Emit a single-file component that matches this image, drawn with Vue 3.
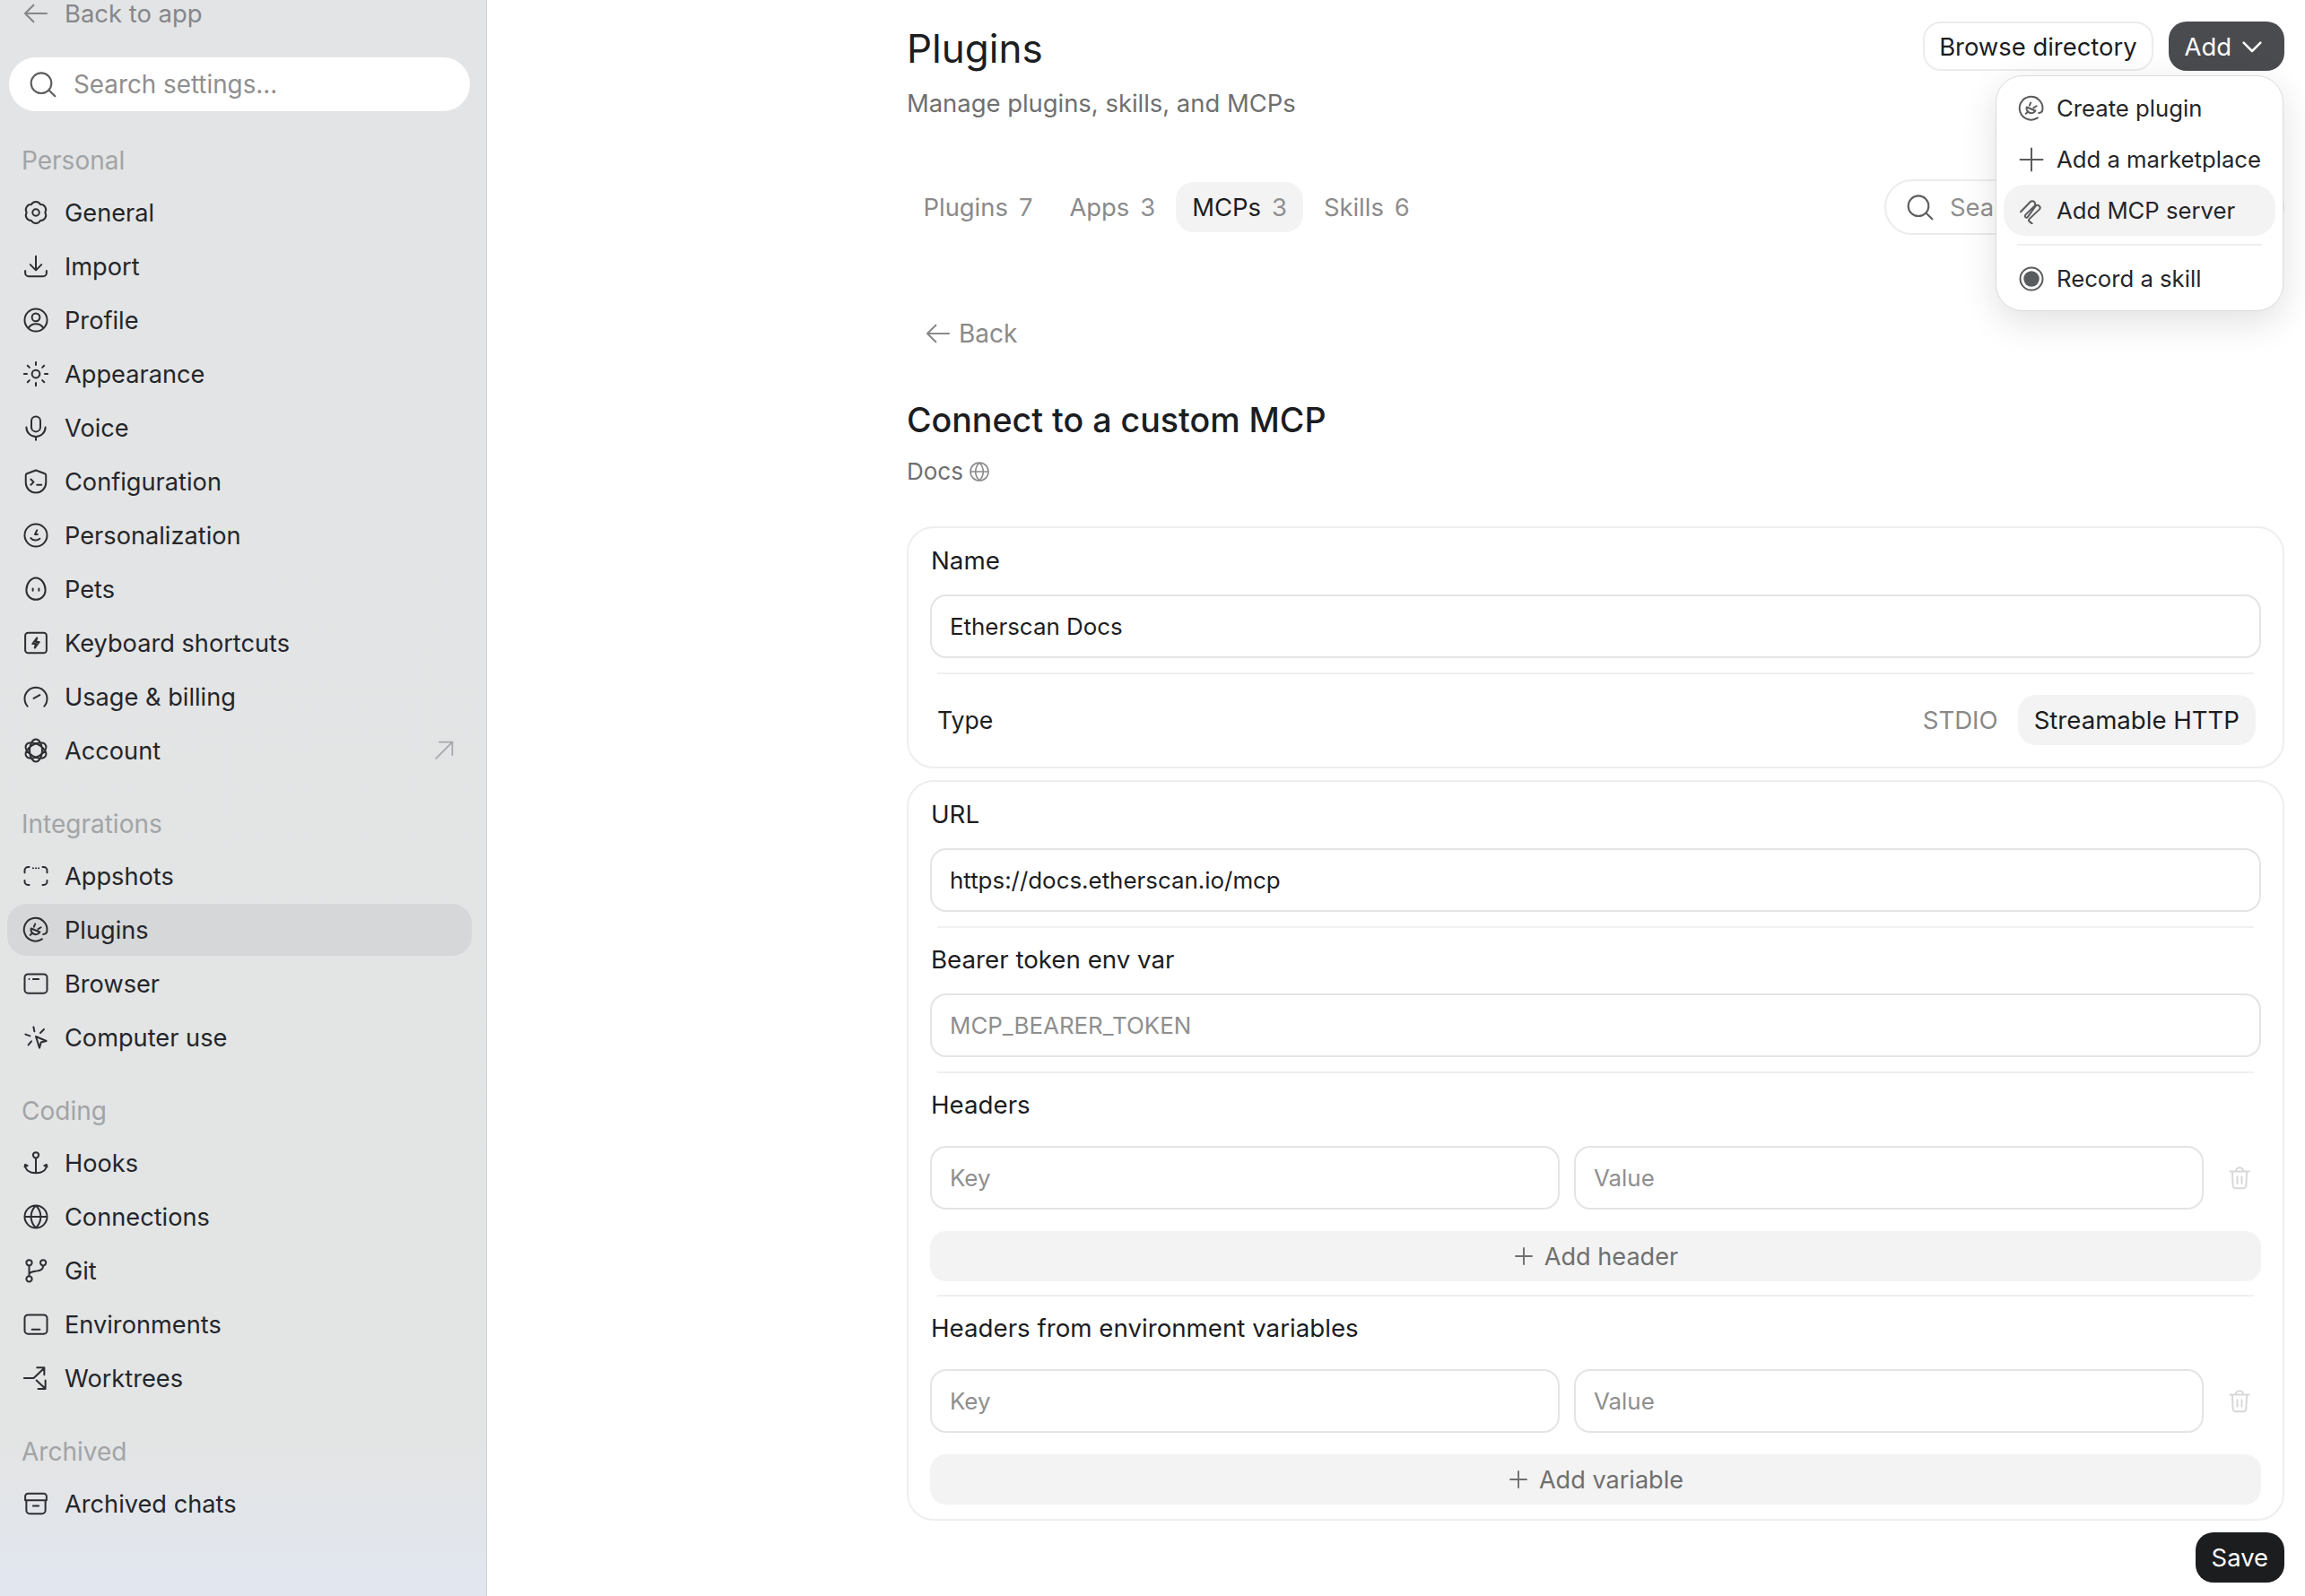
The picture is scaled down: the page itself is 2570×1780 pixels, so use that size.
<template>
  <div class="app">
    <aside class="sidebar">
      <div class="back-app">
        <svg class="ico" viewBox="0 0 24 24"><path d="M21 12H3M10 5l-7 7 7 7" /></svg>
        <span>Back to app</span>
      </div>
      <label class="side-search">
        <svg class="ico" viewBox="0 0 24 24"><path :d="icons.search" /></svg>
        <input placeholder="Search settings..." />
      </label>

      <section v-for="group in nav" :key="group.title" class="group">
        <h4>{{ group.title }}</h4>
        <a v-for="item in group.items" :key="item.label" class="nav-row" :class="{ active: item.label === 'Plugins' }">
          <svg class="ico" viewBox="0 0 24 24"><path :d="icons[item.icon]" /></svg>
          <span>{{ item.label }}</span>
          <svg v-if="item.external" class="ext" viewBox="0 0 24 24"><path d="M4 20 20 4M7 4h13v13" /></svg>
        </a>
      </section>
    </aside>

    <main class="main">
      <header class="head">
        <div>
          <h1>Plugins</h1>
          <p class="sub">Manage plugins, skills, and MCPs</p>
        </div>
        <div class="actions">
          <button class="btn-outline">Browse directory</button>
          <button class="btn-add">
            Add
            <svg viewBox="0 0 24 24"><path d="M4.500 8.500 12 16l7.500-7.500" /></svg>
          </button>
        </div>
      </header>

      <!-- dropdown from the Add button -->
      <div class="menu">
        <div class="menu-row">
          <svg class="ico" viewBox="0 0 24 24"><path :d="icons.plugin" /></svg>
          Create plugin
        </div>
        <div class="menu-row">
          <svg class="ico" viewBox="0 0 24 24"><path d="M12 2v20M2 12h20" /></svg>
          Add a marketplace
        </div>
        <div class="menu-row hover">
          <svg class="ico" viewBox="0 0 24 24"><path :d="icons.mcp" /></svg>
          Add MCP server
        </div>
        <hr />
        <div class="menu-row">
          <svg class="ico" viewBox="0 0 24 24">
            <path d="M22 12a10 10 0 1 1-20 0 10 10 0 0 1 20 0Z" />
            <circle class="dot" cx="12" cy="12" r="7" />
          </svg>
          Record a skill
        </div>
      </div>

      <div class="tabs-row">
        <nav class="tabs">
          <a v-for="t in tabs" :key="t.label" class="tab" :class="{ on: t.label === 'MCPs' }">
            <span>{{ t.label }}</span><small>{{ t.count }}</small>
          </a>
        </nav>
        <label class="tab-search">
          <svg class="ico" viewBox="0 0 24 24"><path :d="icons.search" /></svg>
          <input placeholder="Search..." />
        </label>
      </div>

      <div class="back">
        <svg class="ico" viewBox="0 0 24 24"><path d="M21 12H3M10 5l-7 7 7 7" /></svg>
        Back
      </div>

      <h2>Connect to a custom MCP</h2>
      <div class="docs">
        Docs
        <svg class="ico" viewBox="0 0 24 24"><path :d="icons.globe" /></svg>
      </div>

      <form class="card" @submit.prevent>
        <label class="field-label">Name</label>
        <input class="field" value="Etherscan Docs" />
        <div class="rule"></div>
        <div class="type-row">
          <span>Type</span>
          <div class="seg">
            <a>STDIO</a>
            <a class="on">Streamable HTTP</a>
          </div>
        </div>
      </form>

      <form class="card second" @submit.prevent>
        <label class="field-label">URL</label>
        <input class="field" value="https://docs.etherscan.io/mcp" />
        <div class="rule"></div>

        <label class="field-label">Bearer token env var</label>
        <input class="field" placeholder="MCP_BEARER_TOKEN" />
        <div class="rule"></div>

        <label class="field-label">Headers</label>
        <div class="kv">
          <input class="field" placeholder="Key" />
          <input class="field" placeholder="Value" />
          <svg class="trash" viewBox="0 0 24 24"><path :d="icons.trash" /></svg>
        </div>
        <button class="add-row"><svg viewBox="0 0 24 24"><path d="M12 3v18M3 12h18" /></svg>Add header</button>
        <div class="rule"></div>

        <label class="field-label">Headers from environment variables</label>
        <div class="kv">
          <input class="field" placeholder="Key" />
          <input class="field" placeholder="Value" />
          <svg class="trash" viewBox="0 0 24 24"><path :d="icons.trash" /></svg>
        </div>
        <button class="add-row"><svg viewBox="0 0 24 24"><path d="M12 3v18M3 12h18" /></svg>Add variable</button>
      </form>

      <div class="foot">
        <button class="btn-save">Save</button>
      </div>
    </main>
  </div>
</template>

<script setup>
const nav = [
  {
    title: 'Personal',
    items: [
      { label: 'General', icon: 'gear' },
      { label: 'Import', icon: 'import' },
      { label: 'Profile', icon: 'profile' },
      { label: 'Appearance', icon: 'sun' },
      { label: 'Voice', icon: 'mic' },
      { label: 'Configuration', icon: 'shield' },
      { label: 'Personalization', icon: 'smile' },
      { label: 'Pets', icon: 'egg' },
      { label: 'Keyboard shortcuts', icon: 'bolt' },
      { label: 'Usage & billing', icon: 'gauge' },
      { label: 'Account', icon: 'knot', external: true },
    ],
  },
  {
    title: 'Integrations',
    items: [
      { label: 'Appshots', icon: 'shots' },
      { label: 'Plugins', icon: 'plugin' },
      { label: 'Browser', icon: 'browser' },
      { label: 'Computer use', icon: 'cursor' },
    ],
  },
  {
    title: 'Coding',
    items: [
      { label: 'Hooks', icon: 'anchor' },
      { label: 'Connections', icon: 'globe' },
      { label: 'Git', icon: 'git' },
      { label: 'Environments', icon: 'env' },
      { label: 'Worktrees', icon: 'tree' },
    ],
  },
  {
    title: 'Archived',
    items: [{ label: 'Archived chats', icon: 'archive' }],
  },
]

const tabs = [
  { label: 'Plugins', count: 7 },
  { label: 'Apps', count: 3 },
  { label: 'MCPs', count: 3 },
  { label: 'Skills', count: 6 },
]

// all icons are drawn on a 24 grid, stroke only
const icons = {
  search: 'M19 11a8.500 8.500 0 1 1-17 0 8.500 8.500 0 0 1 17 0ZM17 17l5 5',
  gear: 'M7.900 4.900A4.600 4.600 0 0 1 16.100 4.900 4.600 4.600 0 0 1 20.200 12 4.600 4.600 0 0 1 16.100 19.100 4.600 4.600 0 0 1 7.900 19.100 4.600 4.600 0 0 1 3.800 12 4.600 4.600 0 0 1 7.900 4.900ZM15 12a3 3 0 1 1-6 0 3 3 0 0 1 6 0Z',
  import: 'M12 3v12M7 10.500l5 5 5-5M2.500 16v2a3 3 0 0 0 3 3h13a3 3 0 0 0 3-3v-2',
  profile: 'M22 12a10 10 0 1 1-20 0 10 10 0 0 1 20 0ZM15.500 9.500a3.500 3.500 0 1 1-7 0 3.500 3.500 0 0 1 7 0ZM5.500 19c1.500-2.700 3.800-3.600 6.500-3.600s5 .9 6.500 3.600',
  sun: 'M15.500 12a3.500 3.500 0 1 1-7 0 3.500 3.500 0 0 1 7 0ZM12 1.500v2.500M12 20v2.500M1.500 12H4M20 12h2.500M4.600 4.600l1.700 1.700M17.700 17.700l1.700 1.700M4.600 19.400l1.700-1.700M17.700 6.300l1.700-1.700',
  mic: 'M8 6a4 4 0 0 1 8 0v5.500a4 4 0 0 1-8 0ZM3.500 11.500a8.500 8.500 0 0 0 17 0M12 20v3',
  shield: 'M12 2 20 5a1.500 1.500 0 0 1 1 1.400V13a9 9 0 0 1-18 0V6.400A1.500 1.500 0 0 1 4 5ZM7.500 10l2.500 2.500L7.500 15M13 15h4',
  smile: 'M22 12a10 10 0 1 1-20 0 10 10 0 0 1 20 0ZM7.500 14.500c1.800 2.300 5.500 2.700 8 .5M13 7.500l-1.800 3.700h2.300',
  egg: 'M12 2c4.700 0 8.500 5.300 8.500 11a8.500 8.500 0 0 1-17 0C3.500 7.300 7.300 2 12 2ZM9.300 11.500v1.800M14.700 11.500v1.800',
  bolt: 'M5 3h14a2.500 2.500 0 0 1 2.500 2.500v13A2.500 2.500 0 0 1 19 21H5a2.500 2.500 0 0 1-2.500-2.500v-13A2.500 2.500 0 0 1 5 3ZM13 7.500 9 12.800h3l-1 3.700 4-5.300h-3Z',
  gauge: 'M4.500 20.500a10 10 0 1 1 15 0M10 13.500l5.500-3',
  knot: 'M20.660 17A10 5.600 30 1 1 3.340 7 10 5.600 30 1 1 20.660 17ZM12 22A10 5.600 90 1 1 12 2 10 5.600 90 1 1 12 22ZM3.340 17A10 5.600 150 1 1 20.660 7 10 5.600 150 1 1 3.340 17Z',
  shots: 'M2 9V7a3 3 0 0 1 3-3h1M18 4h1a3 3 0 0 1 3 3v2M22 16v1a3 3 0 0 1-3 3h-1M6 20H5a3 3 0 0 1-3-3v-1M9.500 5h.01M12 5h.01M14.500 5h.01',
  plugin: 'M17.500 20.300A10.300 10.300 0 1 1 22 12c0 2.500-1.500 4-3.500 4M7.800 10.800 15.500 14a4.200 4.200 0 0 1-7.700-3.200ZM10.300 9.300l1-2.500M14 11.300l2.500-1.500M8.500 15.200l-1.500 1.500',
  browser: 'M5 3.500h14a3 3 0 0 1 3 3v11a3 3 0 0 1-3 3H5a3 3 0 0 1-3-3v-11a3 3 0 0 1 3-3ZM6 8h.01M9.500 8h5',
  cursor: 'M12 11.200 21.300 15.200 16.600 16.400 15.200 21.300ZM9.900 2.700l.8 4M2.700 9.300l4 1.400M19.200 4.800 16 8M8 15.500l-2.700 3.200',
  anchor: 'M14.500 5a2.500 2.500 0 1 1-5 0 2.500 2.500 0 0 1 5 0ZM12 7.500V21M2.500 13.500C2.500 18.500 6.500 21 12 21s9.500-2.500 9.500-7.500M2 15.500l.5-2 2 1M22 15.500l-.5-2-2 1',
  globe: 'M22 12a10 10 0 1 1-20 0 10 10 0 0 1 20 0ZM2 12h20M12 2c3 3 4.300 6.500 4.300 10s-1.300 7-4.300 10c-3-3-4.300-6.500-4.300-10S9 5 12 2Z',
  git: 'M8.500 5a2.500 2.500 0 1 1-5 0 2.500 2.500 0 0 1 5 0ZM8.500 19.500a2.500 2.500 0 1 1-5 0 2.500 2.500 0 0 1 5 0ZM21 5a2.500 2.500 0 1 1-5 0 2.500 2.500 0 0 1 5 0ZM6 7.500V17M18.500 7.500c0 4-3 4.500-6 5-2.700.4-5.500.6-6.500 2.500',
  env: 'M5 3.500h14a3 3 0 0 1 3 3v11a3 3 0 0 1-3 3H5a3 3 0 0 1-3-3v-11a3 3 0 0 1 3-3ZM8.500 16.500h7',
  tree: 'M1.500 12H10l9.500-9M13 2.500h6.500V9M12.500 14l7.500 7M20.500 14v7.500H14',
  archive: 'M5 3h14a2.500 2.500 0 0 1 2.500 2.500V9h-19V5.500A2.500 2.500 0 0 1 5 3ZM3.500 9v9A3 3 0 0 0 6.500 21h11a3 3 0 0 0 3-3V9M9.500 14h5',
  mcp: 'M2.400 13 10.900 4.200a2.600 2.600 0 0 1 3.700 3.700L6.600 15.700a1.400 1.400 0 0 0 2 2L15.800 7.800a2.200 2.200 0 0 1 3.200 3.100L10 19.500a1.400 1.400 0 0 0 0 2l2.500 2',
  trash: 'M3.500 6h17M8.500 6a3.500 3.500 0 0 1 7 0M5.500 6l.6 12.500A2.500 2.500 0 0 0 8.600 21h6.800a2.500 2.500 0 0 0 2.500-2.500L18.500 6M10 10.500v6M14 10.500v6',
}
</script>

<style>
html, body { margin: 0; background: #fff; }
</style>

<style scoped>
.app { display: flex; height: 1780px; overflow: hidden; background: #fff; color: #1c1d1f; font-family: Inter, "Liberation Sans", sans-serif; font-size: 27.400px; }
.ico { width: 30px; height: 30px; flex: none; fill: none; stroke: currentColor; stroke-width: 1.600; stroke-linecap: round; stroke-linejoin: round; }
input { font: inherit; color: inherit; border: 0; outline: 0; background: none; padding: 0; min-width: 0; }
input::placeholder { color: #8f8f8f; opacity: 1; }
button { font: inherit; cursor: pointer; }
h1, h2, h4, p { margin: 0; font-weight: 400; }

/* sidebar */
.sidebar { width: 543px; flex: none; box-sizing: border-box; padding: 0 16px 0 8px; background: linear-gradient(180deg, #e3e4e5 0%, #e3e4e4 90%, #e1e6ef 100%); border-right: 1px solid #d0d2d6; color: #24262a; }
.back-app { display: flex; align-items: center; gap: 16px; height: 30px; line-height: 30px; padding-left: 16px; color: #85878a; }
.back-app .ico { width: 32px; height: 32px; }
.side-search { display: flex; align-items: center; gap: 18px; height: 60px; margin: 34px 2px 0 2px; padding-left: 22px; background: #fff; border-radius: 30px; color: #5d5e60; font-size: 27.800px; }
.side-search .ico { width: 32px; height: 32px; }
.side-search input { flex: 1; }
.group { margin-top: 24px; }
.group:first-of-type { margin-top: 27px; }
.group h4 { height: 56px; line-height: 56px; padding-left: 16px; color: #a2a4a6; font-size: 28px; }
.nav-row { display: flex; align-items: center; gap: 17px; height: 60px; padding: 0 17px; font-size: 27.200px; }
.nav-row .ico { color: #2c2e31; }
.nav-row.active { background: #d6d7d9; border-radius: 22px; height: 58px; margin: 1px 0; }
.ext { margin-left: auto; width: 28px; height: 28px; fill: none; stroke: #a6a7a9; stroke-width: 1.500; }

/* main */
.main { position: relative; flex: 1; padding: 0 23px 0 468px; min-width: 0; }
.head { display: flex; justify-content: space-between; height: 200px; padding-top: 24px; box-sizing: border-box; }
h1 { font-size: 44px; line-height: 60px; }
.sub { margin-top: 11px; line-height: 40px; color: #6f6f6f; }
.actions { display: flex; gap: 17px; height: 55px; }
.btn-outline { height: 55px; padding: 0 16px; border: 2px solid #ececec; border-radius: 20px; background: #fff; color: #1c1d1f; }
.btn-add { display: flex; align-items: center; gap: 8px; height: 55px; padding: 0 21px 0 18px; border: 0; border-radius: 20px; background: #4a4b4e; color: #fff; }
.btn-add svg { width: 30px; height: 30px; fill: none; stroke: #fff; stroke-width: 2; stroke-linecap: round; stroke-linejoin: round; }

.menu { position: absolute; z-index: 5; top: 84px; right: 24px; width: 321px; box-sizing: border-box; padding: 7px 8px 0; height: 263px; background: #fff; border: 1px solid #dcdcdc; border-radius: 30px; box-shadow: 0 12px 40px rgba(0, 0, 0, .12); color: #24262a; font-size: 25.700px; }
.menu-row { display: flex; align-items: center; gap: 13px; height: 57px; padding: 0 16px; border-radius: 24px; white-space: nowrap; }
.menu-row .ico { color: #5a5b5d; }
.menu-row.hover { background: #f3f3f3; }
.menu-row .dot { fill: currentColor; stroke: none; }
.menu hr { height: 2px; margin: 9px 15px 8px; border: 0; background: #efefef; }

.tabs-row { display: flex; justify-content: space-between; align-items: center; height: 62px; }
.tabs { display: flex; gap: 4px; }
.tab { display: flex; gap: 12px; align-items: center; height: 56px; padding: 0 18.500px; border-radius: 20px; color: #8a8a8a; }
.tab small { font-size: inherit; color: #8f8f8f; }
.tab.on { background: #f3f3f3; color: #1c1d1f; }
.tab-search { display: flex; align-items: center; gap: 17px; width: 446px; height: 62px; box-sizing: border-box; padding-left: 22px; border: 2px solid #ececec; border-radius: 31px; color: #5d5e60; }
.tab-search .ico { width: 32px; height: 32px; }

.back { display: flex; align-items: center; gap: 7px; height: 40px; margin-top: 90px; padding-left: 19px; color: #8a8a8a; font-size: 28px; }
.back .ico { width: 32px; height: 32px; }
h2 { margin-top: 52px; font-size: 37.600px; line-height: 50px; font-weight: 500; }
.docs { display: flex; align-items: center; gap: 6px; margin-top: 14px; line-height: 36px; color: #6f6f6f; font-size: 26px; }
.docs .ico { width: 24px; height: 24px; color: #8a8a8a; }

.card { margin-top: 43px; padding: 18px 24px 18px 24px; border: 2px solid #eeeeee; border-radius: 30px; }
.card.second { margin-top: 13px; padding-bottom: 16px; }
.field-label { display: block; height: 36px; line-height: 36px; margin-left: 1px; font-size: 27.700px; }
.field { display: block; width: 100%; box-sizing: border-box; height: 71px; margin-top: 20px; padding: 0 20px; border: 2px solid #e4e4e4; border-radius: 18px; font-size: 25.900px; }
.rule { height: 2px; margin: 16px 8px 17px; background: #f0f0f0; }
.type-row { display: flex; justify-content: space-between; align-items: center; height: 56px; margin: 23px 6px 6px 8px; font-size: 27.600px; }
.type-row > span { font-size: 26.600px; }
.seg { display: flex; align-items: center; gap: 22px; }
.seg a { color: #8a8a8a; }
.seg .on { display: flex; align-items: center; height: 56px; padding: 0 18px; border-radius: 20px; background: #f3f3f3; color: #1c1d1f; }

.kv { display: flex; align-items: center; gap: 16px; margin-top: 28px; }
.kv .field { flex: 1; margin: 0; width: 0; }
.trash { width: 30px; height: 30px; padding: 0 9px; flex: none; fill: none; stroke: #d8d8d8; stroke-width: 1.600; stroke-linecap: round; stroke-linejoin: round; }
.add-row { display: flex; align-items: center; justify-content: center; gap: 11px; width: 100%; height: 56px; margin-top: 24px; border: 0; border-radius: 18px; background: #f3f3f3; color: #6f6f6f; font-size: 27.100px; }
.add-row svg { width: 24px; height: 24px; fill: none; stroke: #6f6f6f; stroke-width: 1.900; stroke-linecap: round; }
.add-row + .rule { margin-top: 15px; }

.foot { display: flex; justify-content: flex-end; margin-top: 13px; }
.btn-save { height: 56px; padding: 0 18px; border: 0; border-radius: 20px; background: #1c1d1f; color: #fff; }
</style>
